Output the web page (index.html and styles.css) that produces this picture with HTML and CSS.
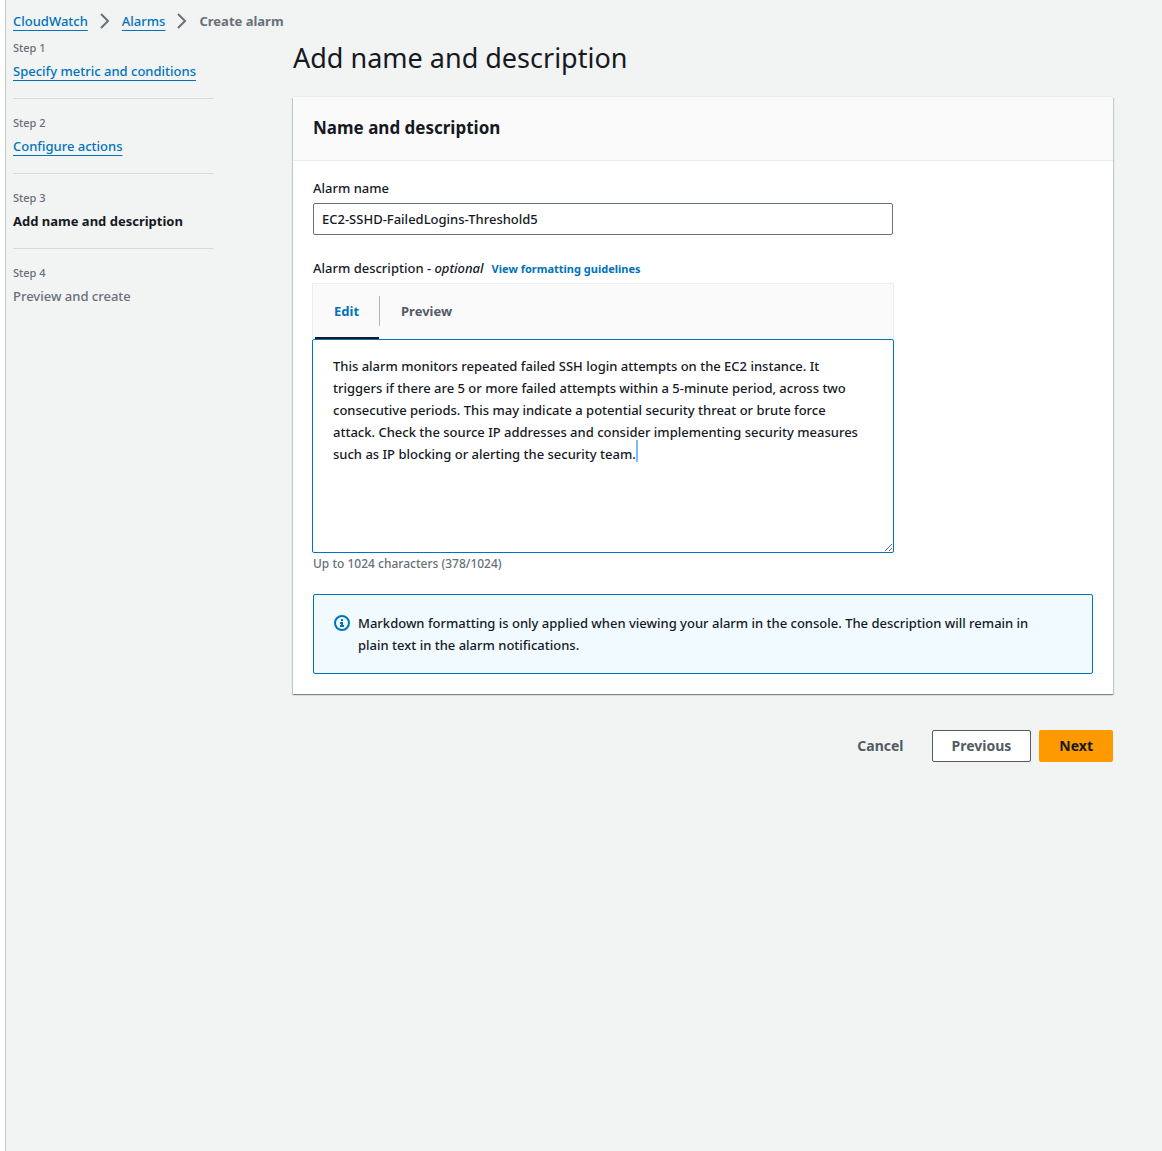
FILE: index.html
```html
<!DOCTYPE html>
<html lang="en">
<head>
<meta charset="utf-8">
<meta name="viewport" content="width=device-width, initial-scale=1">
<title>Create alarm - CloudWatch</title>
<link rel="stylesheet" href="styles.css">
</head>
<body>
<div class="app">
  <nav class="breadcrumbs" aria-label="Breadcrumbs">
    <a class="link" href="#">CloudWatch</a>
    <svg class="chevron" viewBox="0 0 16 16" aria-hidden="true"><path d="M4 1l7 7-7 7"/></svg>
    <a class="link" href="#">Alarms</a>
    <svg class="chevron" viewBox="0 0 16 16" aria-hidden="true"><path d="M4 1l7 7-7 7"/></svg>
    <span class="current">Create alarm</span>
  </nav>
  <div class="wizard">
    <aside class="sidebar">
      <ol class="steps">
        <li class="step"><span class="step-number">Step 1</span><a class="link" href="#">Specify metric and conditions</a></li>
        <li class="step"><span class="step-number">Step 2</span><a class="link" href="#">Configure actions</a></li>
        <li class="step"><span class="step-number">Step 3</span><strong class="step-active">Add name and description</strong></li>
        <li class="step"><span class="step-number">Step 4</span><span class="step-pending">Preview and create</span></li>
      </ol>
    </aside>
    <main class="content">
      <h1 class="title">Add name and description</h1>
      <form class="form">
        <section class="panel">
          <header class="panel-header"><h2 class="panel-title">Name and description</h2></header>
          <div class="panel-body">
            <div class="field">
              <label class="label" for="alarm-name">Alarm name</label>
              <input class="input" id="alarm-name" type="text" value="EC2-SSHD-FailedLogins-Threshold5">
            </div>
            <div class="field">
              <div class="label-row">
                <label class="label" for="alarm-description">Alarm description - <em>optional</em></label>
                <a class="guidelines" href="#">View formatting guidelines</a>
              </div>
              <div class="editor">
                <div class="tabs" role="tablist">
                  <button class="tab tab-selected" type="button" role="tab" aria-selected="true">Edit</button>
                  <button class="tab" type="button" role="tab" aria-selected="false">Preview</button>
                </div>
                <div class="textarea-wrap">
                  <textarea class="textarea" id="alarm-description">This alarm monitors repeated failed SSH login attempts on the EC2 instance. It triggers if there are 5 or more failed attempts within a 5-minute period, across two consecutive periods. This may indicate a potential security threat or brute force attack. Check the source IP addresses and consider implementing security measures such as IP blocking or alerting the security team.</textarea>
                  <span class="caret"></span>
                </div>
              </div>
              <p class="hint">Up to 1024 characters (378/1024)</p>
            </div>
            <div class="alert" role="note">
              <svg class="info" viewBox="0 0 16 16" aria-hidden="true"><circle cx="8" cy="8" r="7"/><path d="M7 5h2M6 8h3M8 7v4M6 11h4"/></svg>
              <p class="alert-text">Markdown formatting is only applied when viewing your alarm in the console. The description will remain in plain text in the alarm notifications.</p>
            </div>
          </div>
        </section>
        <div class="actions">
          <button class="button button-link" type="button">Cancel</button>
          <button class="button button-normal" type="button">Previous</button>
          <button class="button button-primary" type="submit">Next</button>
        </div>
      </form>
    </main>
  </div>
</div>
</body>
</html>
```

FILE: styles.css
```css
* { box-sizing: border-box; }

body {
  margin: 0;
  padding-left: 5px;
  background: #fff;
  color: #16191f;
  font: 500 13px/22px "Noto Sans", "Open Sans", sans-serif;
}

h1, h2, p, ol { margin: 0; padding: 0; }

button, input, textarea { font: inherit; color: inherit; }

.app {
  min-height: 100vh;
  padding: 10px 49px 40px 7px;
  border-left: 1px solid #c6cbcb;
  background: #f2f3f3;
}

.breadcrumbs { display: flex; align-items: center; height: 22px; gap: 9px; }
.chevron { width: 16px; height: 16px; fill: none; stroke: #687078; stroke-width: 2; }
.current { color: #687078; font-weight: 700; }

.link {
  color: #0073bb;
  text-decoration: underline;
  text-decoration-thickness: 1px;
  text-underline-offset: 4px;
}

.wizard { display: flex; gap: 80px; padding-top: 8px; }
.sidebar { flex: 0 0 200px; }
.steps { list-style: none; }
.step {
  display: flex;
  flex-direction: column;
  align-items: flex-start;
  gap: 4px;
  padding-bottom: 16px;
  white-space: nowrap;
}
.step + .step { padding-top: 16px; border-top: 1px solid #d5dbdb; }
.step-number { color: #687078; font-size: 11px; line-height: 16px; }
.step-active { font-weight: 700; }
.step-pending { color: #687078; }

.content { flex: 1; min-width: 0; }
.title { font-size: 27px; line-height: 36px; font-weight: 400; }

.panel {
  margin-top: 21px;
  background: #fff;
  box-shadow: 0 1px 1px 0 rgba(0, 28, 36, .3), 1px 1px 1px 0 rgba(0, 28, 36, .15), -1px 1px 1px 0 rgba(0, 28, 36, .15), 0 -1px 0 0 #eaeded;
}
.panel-header { padding: 20px 20px 21px; border-bottom: 1px solid #eaeded; background: #fafafa; }
.panel-title { font-size: 17px; line-height: 22px; font-weight: 700; }
.panel-body { display: flex; flex-direction: column; gap: 22px; padding: 16px 20px 20px; }

.field { max-width: 580px; }
.label { display: block; }
.label-row { display: flex; align-items: baseline; gap: 8px; height: 22px; }
.guidelines { color: #0073bb; font-size: 11px; font-weight: 700; text-decoration: none; }

.input {
  display: block;
  width: 100%;
  height: 32px;
  margin-top: 4px;
  padding: 4px 8px;
  border: 1px solid #687078;
  border-radius: 2px;
  background: #fff;
}

.editor { margin: 4px -1px 0; }
.tabs {
  display: flex;
  height: 56px;
  padding-left: 2px;
  border: 1px solid #eaeded;
  border-bottom: 0;
  background: #fafafa;
}
.tab {
  padding: 0 22px 2px;
  border: 0;
  background: none;
  color: #545b64;
  font-weight: 700;
}
.tab-selected {
  padding: 0 20px 0 19px;
  border-bottom: 2px solid #16191f;
  color: #0073bb;
}
.tab + .tab { background: linear-gradient(#aab7b8, #aab7b8) 0 12px / 1px 30px no-repeat; }

.textarea-wrap { position: relative; }
.textarea {
  display: block;
  width: 100%;
  height: 214px;
  padding: 15px 30px 15px 20px;
  border: 1px solid #0073bb;
  border-radius: 2px;
  outline: 0;
  background: #fff;
  resize: vertical;
}
.caret { position: absolute; top: 101px; left: 324px; width: 2px; height: 22px; background: #80b9ff; }
.hint { margin-top: 3px; color: #687078; font-size: 12px; line-height: 16px; }

.alert {
  display: flex;
  align-items: flex-start;
  gap: 8px;
  padding: 17px 20px;
  border: 1px solid #0073bb;
  border-radius: 2px;
  background: #f1faff;
}
.alert-text { padding-right: 20px; }
.info { flex: none; width: 16px; height: 16px; margin-top: 3px; fill: none; stroke: #0073bb; stroke-width: 2; }

.actions { display: flex; justify-content: flex-end; gap: 8px; margin-top: 36px; }
.button {
  height: 32px;
  padding: 0 19px;
  border: 1px solid transparent;
  border-radius: 2px;
  font-size: 14px;
  font-weight: 700;
}
.button-link { background: none; color: #545b64; }
.button-normal { border-color: #545b64; background: #fff; color: #545b64; }
.button-primary { background: #ff9900; color: #16191f; }
```
